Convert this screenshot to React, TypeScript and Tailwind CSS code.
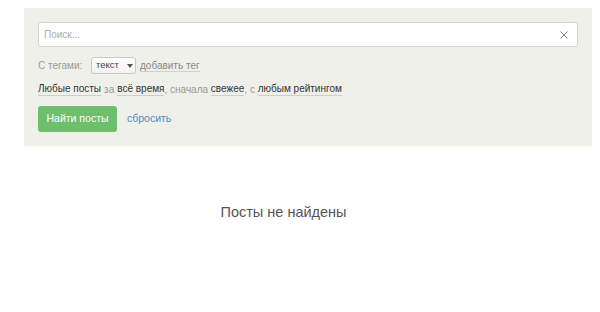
function Link({ children, dark = true }: { children: React.ReactNode; dark?: boolean }) {
  return (
    <span className={`border-b border-[#cfcfc7] leading-[13px] ${dark ? 'text-[#333]' : 'text-[#888]'}`}>
      {children}
    </span>
  )
}

export default function App() {
  return (
    <div className="w-[600px] h-[312px] bg-white font-['Liberation_Sans',Arial,sans-serif] text-[10px]">
      <div className="pt-[8px] pl-[24px] pr-[8px]">
        <div className="bg-[#f0f0eb] px-[14px] pt-[14px] pb-[14px]">
          <div className="flex items-center h-[25px] bg-white border border-[#d4d4cf] rounded-[3px] pl-[5px] pr-[9px]">
            <span className="flex-1 text-[#aaa]">Поиск...</span>
            <svg width="8" height="8" viewBox="0 0 8 8" className="text-[#8a8a8a]">
              <path d="M0.5 0.5 L7.5 7.5 M7.5 0.5 L0.5 7.5" stroke="currentColor" strokeWidth="1" />
            </svg>
          </div>

          <div className="flex items-center mt-[10px] h-[17px]">
            <span className="text-[#999] w-[53px]">С тегами:</span>
            <div className="flex items-center h-[17px] w-[45px] border border-[#c9c9c4] rounded-[3px] bg-gradient-to-b from-white to-[#f2f2f2] pl-[4px] text-[9.5px] text-[#444]">
              <span>текст</span>
              <span className="ml-[8px] w-0 h-0 border-l-[3px] border-r-[3px] border-t-[4px] border-l-transparent border-r-transparent border-t-[#555]" />
            </div>
            <span className="ml-[4px]">
              <Link dark={false}>добавить тег</Link>
            </span>
          </div>

          <div className="mt-[7px] h-[16px] flex items-center text-[#999]">
            <Link>Любые посты</Link>
            <span className="mx-[3px]">за</span>
            <Link>всё время</Link>
            <span>, сначала&nbsp;</span>
            <Link>свежее</Link>
            <span>, с&nbsp;</span>
            <Link>любым рейтингом</Link>
          </div>

          <div className="mt-[9px] flex items-center">
            <button className="h-[26px] w-[79px] rounded-[3px] bg-[#6dbf6c] text-white text-[10.5px]">
              Найти посты
            </button>
            <span className="ml-[10px] text-[#4a8cc0] text-[10.5px]">сбросить</span>
          </div>
        </div>
      </div>

      <div className="w-[567px] mt-[57px] text-center text-[14.5px] leading-[18px] text-[#555]">
        Посты не найдены
      </div>
    </div>
  )
}
